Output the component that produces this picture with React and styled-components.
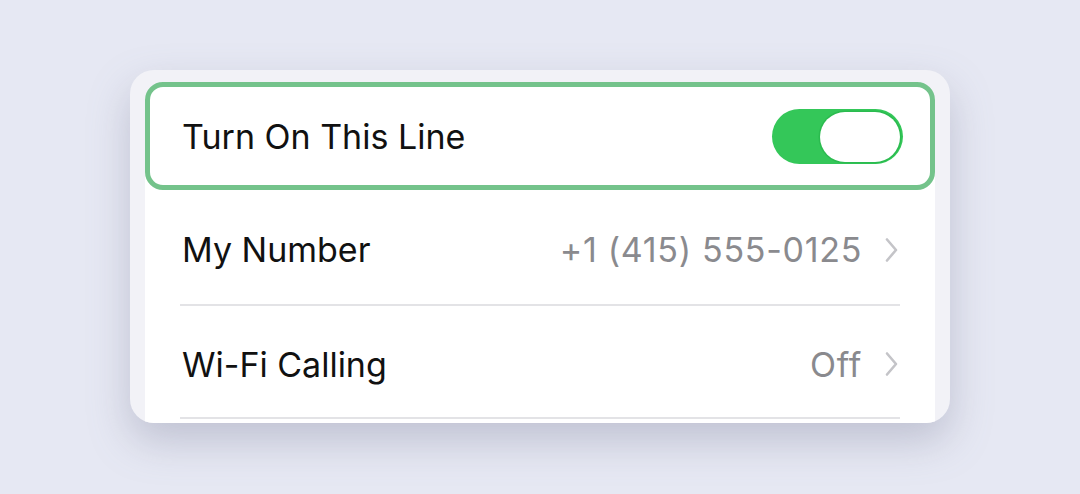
import React from "react";
import styled, { createGlobalStyle } from "styled-components";

const GlobalStyle = createGlobalStyle`
  html, body {
    margin: 0;
    padding: 0;
    background: #e6e8f3;
  }
  body {
    font-family: Inter, "Noto Sans", sans-serif;
    -webkit-font-smoothing: antialiased;
  }
`;

const Page = styled.div`
  width: 1080px;
  height: 494px;
  display: flex;
  justify-content: center;
  padding-top: 70px;
  box-sizing: border-box;
  background: #e6e8f3;
`;

const Card = styled.div`
  width: 820px;
  height: 353px;
  box-sizing: border-box;
  padding: 12px 15px 0 15px;
  background: #f2f2f7;
  border-radius: 24px;
  overflow: hidden;
  box-shadow: 0 18px 40px rgba(120, 124, 150, 0.35);
`;

const List = styled.div`
  background: #fff;
  border-radius: 20px 20px 0 0;
  height: 100%;
`;

const HighlightRow = styled.div`
  height: 108px;
  box-sizing: border-box;
  display: flex;
  align-items: center;
  padding: 1px 27px 0 32px;
  border: 5px solid #74c38b;
  border-radius: 18px;
`;

const Row = styled.div`
  height: ${(p) => p.$height}px;
  box-sizing: border-box;
  display: flex;
  align-items: center;
  padding: 3px 37px 0 37px;
  position: relative;

  &::after {
    content: "";
    position: absolute;
    left: 35px;
    right: 35px;
    bottom: 0;
    height: 2px;
    background: #e3e3e6;
  }
`;

const Label = styled.span`
  flex: 1;
  font-size: 34px;
  color: #111;
`;

const Value = styled.span`
  font-size: 34px;
  color: #8a8a8e;
  letter-spacing: 0.7px;
  margin-right: 23px;
`;

const Toggle = styled.div`
  width: 131px;
  height: 55px;
  border-radius: 28px;
  background: #34c759;
  display: flex;
  align-items: center;
  justify-content: flex-end;
  padding: 2px 3px;
  box-sizing: border-box;
`;

const Knob = styled.div`
  width: 80px;
  height: 50px;
  border-radius: 25px;
  background: #fff;
  box-shadow: 0 0 0 1.5px #2bbb4f;
`;

const Chevron = () => (
  <svg width="13" height="26" viewBox="0 0 13 26" fill="none">
    <path
      d="M2 2.5 L11 13 L2 23.5"
      stroke="#c4c4c8"
      strokeWidth="2.6"
      strokeLinecap="round"
      strokeLinejoin="round"
    />
  </svg>
);

export default function App() {
  return (
    <Page>
      <GlobalStyle />
      <Card>
        <List>
          <HighlightRow>
            <Label>Turn On This Line</Label>
            <Toggle>
              <Knob />
            </Toggle>
          </HighlightRow>
          <Row $height={116}>
            <Label>My Number</Label>
            <Value>+1 (415) 555-0125</Value>
            <Chevron />
          </Row>
          <Row $height={113}>
            <Label>Wi-Fi Calling</Label>
            <Value>Off</Value>
            <Chevron />
          </Row>
        </List>
      </Card>
    </Page>
  );
}
